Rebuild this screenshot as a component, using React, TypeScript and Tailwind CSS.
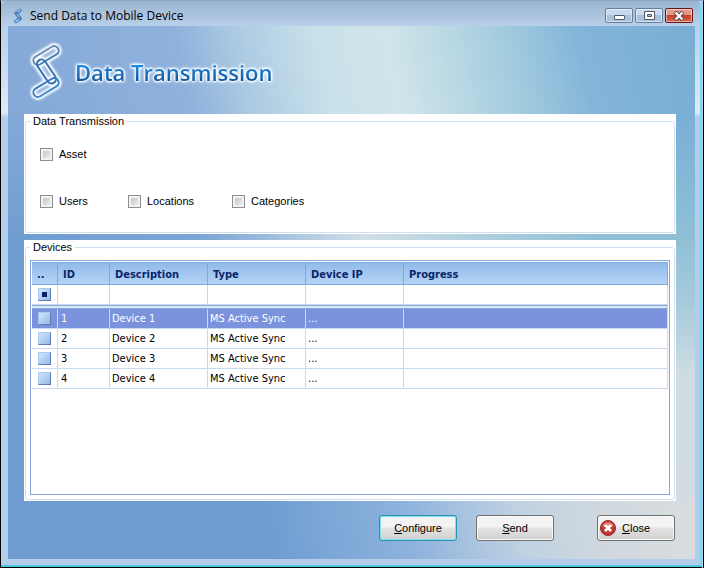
import React from "react";

const devices = [1, 2, 3, 4].map((id) => ({
  id,
  description: `Device ${id}`,
  type: "MS Active Sync",
  ip: "...",
}));

function ChainLinks() {
  return (
    <>
      <rect x="3" y="9" width="28" height="9" rx="4.500" transform="rotate(-31 17 13.500)" />
      <rect x="4" y="25" width="27" height="9" rx="4.500" transform="rotate(56 17.500 29.500)" />
      <rect x="3" y="41" width="28" height="9" rx="4.500" transform="rotate(-31 17 45.500)" />
    </>
  );
}

function Chain({ className, halo }: { className: string; halo: boolean }) {
  const paint = halo ? "chain-large" : "chain-small";
  return (
    <svg viewBox="0 0 34 60" className={className} fill="none" aria-hidden="true">
      <defs>
        <linearGradient id={paint} gradientUnits="userSpaceOnUse" x1="0" y1="4" x2="0" y2="56">
          <stop offset="0" stopColor="#7597bb" />
          <stop offset="0.5" stopColor="#276cae" />
          <stop offset="1" stopColor="#3f8fd8" />
        </linearGradient>
        <filter id="chain-glow" x="-30%" y="-30%" width="160%" height="160%">
          <feGaussianBlur stdDeviation="0.8" />
        </filter>
      </defs>
      {halo && (
        <g stroke="#fff" strokeWidth="6" filter="url(#chain-glow)">
          <ChainLinks />
        </g>
      )}
      <g stroke={`url(#${paint})`} strokeWidth={halo ? 2 : 4}>
        <ChainLinks />
      </g>
    </svg>
  );
}

function TickBox({ label, className = "" }: { label: string; className?: string }) {
  return (
    <label className={`flex items-center gap-1.5 ${className}`}>
      <input
        type="checkbox"
        className="size-[13px] appearance-none border border-[#8e8f8f] bg-linear-to-br from-[#b8bdc2] to-[#f6f6f6] shadow-[inset_0_0_0_2px_#f0f1f1] checked:bg-[#4b6fb5]"
      />
      {label}
    </label>
  );
}

function RowTick({ label, mixed = false }: { label: string; mixed?: boolean }) {
  return (
    <span className="grid place-items-center">
      <input
        type="checkbox"
        aria-label={label}
        className="col-start-1 row-start-1 size-[13px] appearance-none border border-t-[#a9c8ee] border-r-[#5c7cb4] border-b-[#5c7cb4] border-l-[#a9c8ee] bg-linear-to-br from-[#d3e6fb] to-[#93bae9]"
      />
      {mixed && <span className="pointer-events-none col-start-1 row-start-1 size-[5px] bg-[#04246e]" />}
    </span>
  );
}

function Group({ title, className, children }: { title: string; className: string; children: React.ReactNode }) {
  return (
    <section className="bg-white">
      <fieldset className={`mx-px mb-px min-w-0 rounded-[3px] border border-[#d0dfee] px-1 ${className}`}>
        <legend className="px-[3px] leading-[14px]">{title}</legend>
        {children}
      </fieldset>
    </section>
  );
}

const captionButton =
  "flex h-[15px] w-7 items-center justify-center rounded-[2px] border shadow-[inset_0_0_0_1px_#ffffff80]";
const pushButton =
  "flex h-[26px] w-[78px] items-center rounded-[3px] border bg-linear-to-b from-[#f3f3f3] from-45% via-[#e4e4e4] via-50% to-[#cfcfcf]";

export default function App() {
  return (
    <div className="flex min-h-screen flex-col border-x border-t border-x-black border-t-[#8ba7c5] bg-[#b9d1ea] pr-px pb-px font-['Liberation_Sans',Arial,sans-serif] text-[11px] text-black">
      <div className="flex flex-1 flex-col rounded-t-[5px] border-r-2 border-b-2 border-r-[#6fdcf5] border-b-[#4cc5dc] bg-[linear-gradient(to_bottom,#9bb5d1_0,#b9d1ea_26px,#dfeaf6_112px,#b4cdea_116px)] pr-[5px] pb-[6px] pl-[7px] shadow-[0_1px_0_#000]">
        <header className="flex h-[25px] items-center pt-1">
          <Chain className="mx-0.5 h-4 w-4" halo={false} />
          <h1 className="flex-1 pl-0.5 font-['Open_Sans',sans-serif] text-[12px] leading-4">Send Data to Mobile Device</h1>
          <div className="flex gap-0.5 pr-0.5">
            <button aria-label="Minimize" className={`${captionButton} border-[#667f9d] bg-linear-to-b from-[#c6d9ee] from-45% to-[#a9c1db] to-50%`}>
              <span className="mt-1 h-[5px] w-[11px] rounded-[1px] border border-[#535666] bg-white" />
            </button>
            <button aria-label="Maximize" className={`${captionButton} border-[#667f9d] bg-linear-to-b from-[#c6d9ee] from-45% to-[#a9c1db] to-50%`}>
              <svg viewBox="0 0 11 9" className="h-[9px] w-[11px]" aria-hidden="true">
                <path d="M.5.5h10v8H.5ZM3.5 3.5h4v2h-4Z" fill="#fff" fillRule="evenodd" stroke="#535666" />
              </svg>
            </button>
            <button aria-label="Close window" className={`${captionButton} border-[#6b1512] bg-linear-to-b from-[#e29a8d] from-45% via-[#c3402a] via-50% to-[#d6694f]`}>
              <svg viewBox="0 0 12 10" className="h-[10px] w-3" aria-hidden="true">
                <path d="m2 1 8 8M10 1 2 9" stroke="#5c4650" strokeWidth="4" />
                <path d="m2.500 1.500 7 7M9.500 1.500l-7 7" stroke="#fff" strokeWidth="2.200" />
              </svg>
            </button>
          </div>
        </header>

        <main className="flex flex-1 flex-col bg-[linear-gradient(to_bottom,#84a9d8_88px,#6f9dd1_220px),linear-gradient(to_right,#6f9dd1_0%,#7ba5d5_28%,#d0dfe6_52%,#d0dfe600_86%),linear-gradient(to_bottom,#7ab0d6_90px,#8fbfd6_210px,#a8cbdc_280px,#cfdde3_350px,#d3dbe0)] bg-[length:16px_100%,100%_100%,100%_100%] bg-no-repeat">
          <div className="flex h-[88px] items-center bg-[linear-gradient(78deg,#84a9d8_0%,#8fb1dc_26%,#a9c8e2_34%,#c9e1ea_46%,#d0e5ea_56%,#a5cddf_72%,#84b5d9_83%,#79aed4_100%)] pt-1 pl-[21px]">
            <Chain className="h-[60px] w-[34px]" halo />
            <h2 className="ml-3 bg-linear-to-b from-[#1f83e0] from-35% to-[#14599f] to-75% bg-clip-text font-['Open_Sans',sans-serif] text-[22px] leading-8 font-semibold text-transparent [filter:drop-shadow(0_0_1px_#fff)_drop-shadow(0_0_1px_#fff)_drop-shadow(0_0_1px_#fff)]">
              Data Transmission
            </h2>
          </div>

          <div className="flex flex-col gap-1.5 pr-[19px] pl-4">
            <Group title="Data Transmission" className="h-[119px]">
              <div className="pt-[17px] pl-2.5 leading-[18px]">
                <TickBox label="Asset" />
                <div className="mt-[29px] flex">
                  <TickBox label="Users" className="w-[88px]" />
                  <TickBox label="Locations" className="w-[104px]" />
                  <TickBox label="Categories" />
                </div>
              </div>
            </Group>

            <Group title="Devices" className="pt-[6px] pb-1">
              <div className="h-[235px] border border-[#85a6d8] p-px font-['DejaVu_Sans_Condensed','DejaVu_Sans',sans-serif]">
                <table className="w-full table-fixed border-separate border-spacing-0 text-left leading-[13px]">
                  <colgroup>
                    <col className="w-[26px]" />
                    <col className="w-[52px]" />
                    <col className="w-[98px]" />
                    <col className="w-[98px]" />
                    <col className="w-[98px]" />
                    <col />
                  </colgroup>
                  <thead>
                    <tr className="h-[23px] bg-linear-to-b from-[#8fbaea] to-[#b7d5f7] text-[#0a246a] *:border-y *:border-r *:border-[#7fa8dc] *:p-0 *:pt-px *:pl-[5px] *:font-bold">
                      <th>..</th>
                      <th>ID</th>
                      <th>Description</th>
                      <th>Type</th>
                      <th>Device IP</th>
                      <th>Progress</th>
                    </tr>
                  </thead>
                  <tbody className="[&_td]:border-r [&_td]:border-b [&_td]:border-[#c8daee] [&_td]:p-0">
                    <tr className="h-5">
                      <td><RowTick label="Select all devices" mixed /></td>
                      <td /><td /><td /><td /><td />
                    </tr>
                    <tr className="h-1"><td colSpan={6} className="h-1 border-y border-y-[#85a6d8]! bg-[#dbe9fa]" /></tr>
                    {devices.map((d, i) => (
                      <tr key={d.id} className={i === 0 ? "h-5 bg-[#7b93dc] text-white" : "h-5"}>
                        <td><RowTick label={`Select ${d.description}`} /></td>
                        <td className="pl-[3px]!">{d.id}</td>
                        <td className="pl-0.5!">{d.description}</td>
                        <td className="pl-0.5!">{d.type}</td>
                        <td className="pl-0.5!">{d.ip}</td>
                        <td />
                      </tr>
                    ))}
                  </tbody>
                </table>
              </div>
            </Group>
          </div>

          <footer className="flex flex-1 items-start justify-end bg-[linear-gradient(80deg,#6f9dd1_38%,#8db2dd_58%,#bfd1e2_74%,#d0d8de_86%,#d9dddf)] px-5 pt-[14px] pb-[18px]">
            <button className={`${pushButton} mr-[19px] justify-center border-[#2c93ad] shadow-[inset_0_0_0_1px_#7fe0f0]`}>
              <span><u>C</u>onfigure</span>
            </button>
            <button className={`${pushButton} mr-[43px] justify-center border-[#707070] shadow-[inset_0_0_0_1px_#fafafa]`}>
              <span><u>S</u>end</span>
            </button>
            <button className={`${pushButton} gap-1.5 border-[#707070] pl-0.5 shadow-[inset_0_0_0_1px_#fafafa]`}>
              <svg viewBox="0 0 16 16" className="size-4" aria-hidden="true">
                <circle cx="8" cy="8" r="7.500" fill="#c8372f" stroke="#8d2a28" />
                <path d="M2 6a6.500 6.500 0 0 1 12 0Q8 9 2 6Z" fill="#e58e86" opacity=".7" />
                <path d="m5 5 6 6M11 5l-6 6" stroke="#fff" strokeWidth="2.800" />
              </svg>
              <span><u>C</u>lose</span>
            </button>
          </footer>
        </main>
      </div>
    </div>
  );
}
